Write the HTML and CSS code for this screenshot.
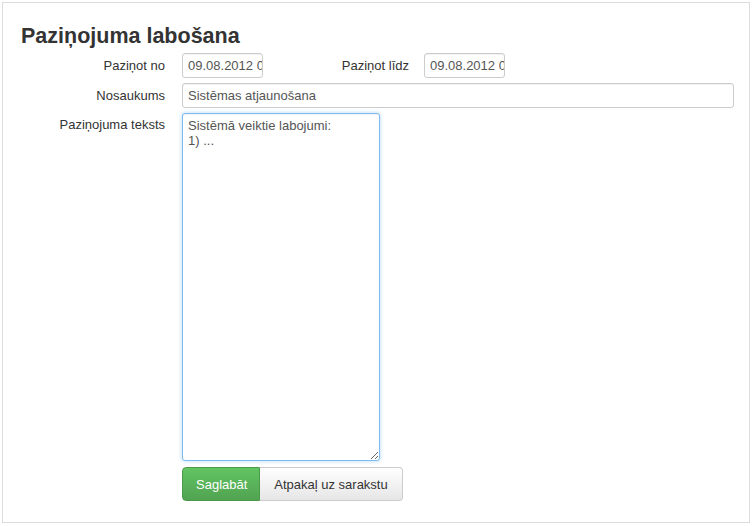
FILE: index.html
```html
<!DOCTYPE html>
<html lang="lv">
  <head>
    <meta charset="UTF-8" />
    <title>Paziņojuma labošana</title>
    <link rel="stylesheet" href="styles.css">
  </head>
  <body>
    <div class="panel">
      <h1 class="title">Paziņojuma labošana</h1>
      <form class="form">
        <label class="label">Paziņot no</label>
        <div class="dates">
          <input class="field field-date" value="09.08.2012 00:00" />
          <label class="label label-to">Paziņot līdz</label>
          <input class="field field-date" value="09.08.2012 00:00" />
        </div>

        <label class="label">Nosaukums</label>
        <input class="field field-wide" value="Sistēmas atjaunošana" />

        <label class="label label-top">Paziņojuma teksts</label>
        <textarea class="field field-text">Sistēmā veiktie labojumi:
1) ...</textarea>

        <div></div>
        <div class="actions">
          <button type="button" class="btn btn-save">Saglabāt</button>
          <button type="button" class="btn btn-back">Atpakaļ uz sarakstu</button>
        </div>
      </form>
    </div>
  </body>
</html>
```

FILE: styles.css
```css
* {
  box-sizing: border-box;
  font-family: "Liberation Sans", Arial, sans-serif;
}

body {
  margin: 0;
  background-color: #fff;
}

.panel {
  margin: 2px;
  width: 748px;
  height: 521px;
  border: 1px solid #dcdcdc;
  padding-top: 20px;
}

.title {
  margin: 0 0 4px 18px;
  font-size: 21.5px;
  line-height: 26px;
  font-weight: bold;
  color: #333;
}

.form {
  display: grid;
  grid-template-columns: 162px auto;
  column-gap: 17px;
  row-gap: 5px;
  align-items: center;
}

.label {
  text-align: right;
  font-size: 13px;
  color: #333;
}

.label-top {
  align-self: start;
  padding-top: 4px;
}

.dates {
  display: flex;
  align-items: center;
}

.label-to {
  width: 146px;
  margin-right: 15px;
}

.field {
  height: 25px;
  padding: 0 5px;
  border: 1px solid #ccc;
  border-radius: 3px;
  font-size: 13px;
  color: #555;
  background-color: #fff;
  box-shadow: inset 0 1px 1px rgba(0, 0, 0, 0.06);
  outline: none;
}

.field-date {
  width: 81px;
  padding-right: 0;
}

.field-wide {
  width: 552px;
}

.field-text {
  width: 198px;
  height: 348px;
  padding: 4px 5px;
  line-height: 15px;
  resize: vertical;
  border-color: #7fbbee;
  box-shadow: inset 0 1px 1px rgba(0, 0, 0, 0.06), 0 0 4px rgba(82, 168, 236, 0.45);
}

.actions {
  display: flex;
  margin-top: 1px;
}

.btn {
  height: 34px;
  padding: 0 13px;
  font-size: 13px;
  border: 1px solid #ccc;
  cursor: pointer;
}

.btn-save {
  width: 78px;
  color: #fff;
  border-color: #4a9a4a;
  border-radius: 4px 0 0 4px;
  background: linear-gradient(#62c462, #51a351);
}

.btn-back {
  width: 143px;
  color: #333;
  border-left: none;
  border-radius: 0 4px 4px 0;
  background: linear-gradient(#fff, #e6e6e6);
}
```
